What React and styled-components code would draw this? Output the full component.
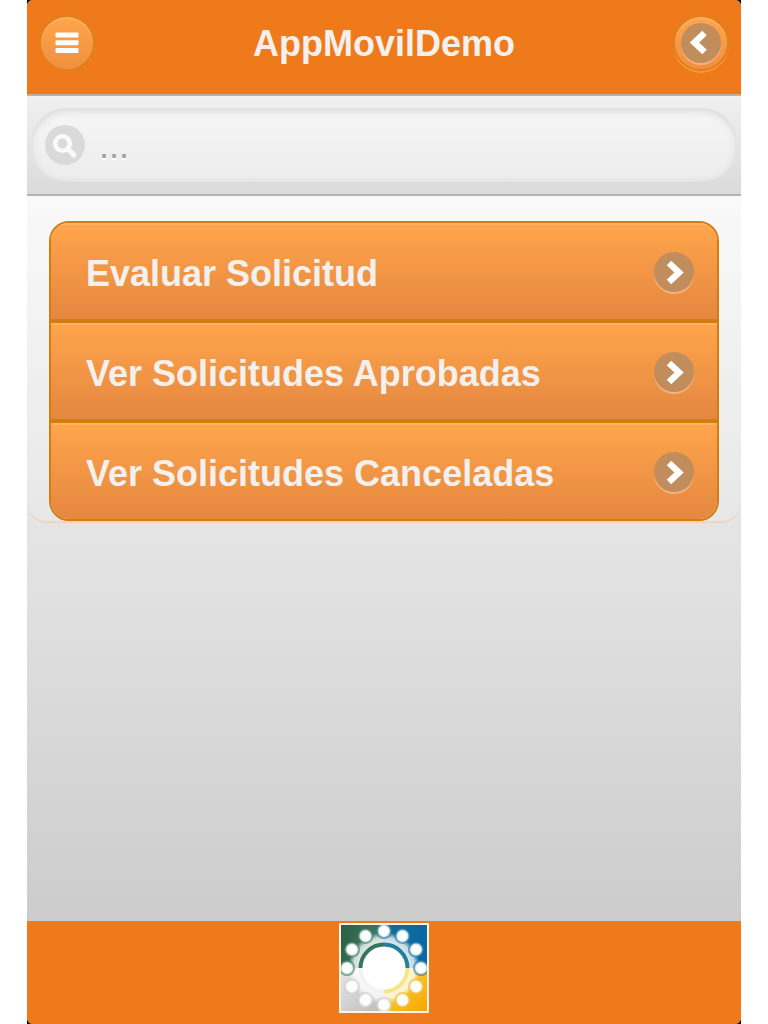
import React from "react";
import styled, { createGlobalStyle } from "styled-components";

const GlobalStyle = createGlobalStyle`
  *, *::before, *::after { box-sizing: border-box; }
  body {
    margin: 0;
    background: #fff;
    font-family: "Liberation Sans", Arial, sans-serif;
  }
`;

const Page = styled.div`
  min-height: 100vh;
  padding: 0 27px;
  display: flex;
`;

const Device = styled.div`
  flex: 1;
  min-width: 0;
  display: flex;
  background: #000;
`;

const Screen = styled.div`
  flex: 1;
  min-width: 0;
  display: flex;
  flex-direction: column;
  border-radius: 6px;
  overflow: hidden;
  background: #ccc;
`;

const Header = styled.header`
  display: flex;
  align-items: center;
  justify-content: space-between;
  height: 96px;
  padding: 0 12px 8px;
  background: #ee7a1b;
  border-bottom: 2px solid #bdb0a8;
`;

const Title = styled.h1`
  margin: 0;
  padding-top: 2px;
  font-size: 36px;
  line-height: 44px;
  font-weight: 700;
  color: #f3f0ee;
`;

const RoundButton = styled.button`
  width: 56px;
  height: 56px;
  padding: 0;
  display: flex;
  align-items: center;
  justify-content: center;
  border: 2px solid #df811c;
  border-radius: 50%;
  background: linear-gradient(#ffa54b, #f0903f);
  box-shadow: inset 0 2px 0 #ffb163${(p) => (p.$raised ? ", 0 2px 0 #f9973a" : "")};
`;

const Disc = styled.span`
  display: flex;
  flex: none;
  width: 40px;
  height: 40px;
  border-radius: 50%;
  background: ${(p) => (p.$muted ? "#dadada" : "#c28d5d")};
  box-shadow: ${(p) => (p.$muted ? "none" : "0 2px 0 #f8b17c")};
`;

const SearchBar = styled.form`
  height: 100px;
  padding: 12px 3px 14px;
  background: linear-gradient(#f0f0f0, #dadada);
  border-bottom: 2px solid #b3b3b3;
`;

const SearchField = styled.label`
  display: flex;
  align-items: center;
  gap: 14px;
  height: 74px;
  padding: 0 15px;
  border-radius: 37px;
  background: linear-gradient(#f6f6f6, #ececec);
  box-shadow: inset 0 2px 8px #d2d2d2;
`;

const SearchInput = styled.input`
  flex: 1;
  min-width: 0;
  height: 56px;
  padding: 2px 0 0;
  border: 0;
  outline: 0;
  background: transparent;
  font: 36px "Liberation Sans", Arial, sans-serif;
  color: #333;
  text-shadow: 0 2px 0 #fff;
  &::placeholder { color: #a0a0a0; opacity: 1; }
`;

const Content = styled.main`
  flex: 1;
  background: linear-gradient(#f9f9f9, #ccc);
`;

const Panel = styled.div`
  padding: 25px 22px 0;
  border-bottom: 2px solid #f3d5bd;
  border-radius: 0 0 20px 20px;
  background: rgba(255, 255, 255, 0.1);
`;

const Menu = styled.ul`
  margin: 0;
  padding: 0;
  list-style: none;
  border: 2px solid #d57b10;
  border-radius: 20px;
  overflow: hidden;
`;

const MenuItem = styled.li`
  & + & { border-top: 4px solid #d57b10; }
`;

const MenuLink = styled.a`
  display: flex;
  align-items: center;
  justify-content: space-between;
  height: 96px;
  padding: 2px 23px 0 35px;
  background: linear-gradient(#ffa54b, #e48740);
  box-shadow: inset 0 2px 0 #ffb367;
  color: #f3f0ee;
  font-size: 36px;
  line-height: 44px;
  font-weight: 700;
  text-decoration: none;
`;

const MenuLabel = styled.span`
  padding-top: 4px;
`;

const Footer = styled.footer`
  display: flex;
  justify-content: center;
  height: 103px;
  padding-top: 2px;
  background: #ee7a1b;
`;

const Chevron = ({ left }) => (
  <svg width="40" height="40" viewBox="0 0 40 40" aria-hidden="true">
    <path
      d={left ? "M23.500 10 13.500 19.500 23.500 29" : "M15 11 25 20.500 15 30"}
      fill="none"
      stroke="#fff"
      strokeWidth="6.500"
    />
  </svg>
);

const Bars = () => (
  <svg width="40" height="40" viewBox="0 0 40 40" aria-hidden="true">
    <g fill="#fff">
      <rect x="8.500" y="9.500" width="23" height="5" rx="1" />
      <rect x="8.500" y="17.300" width="23" height="5" rx="1" />
      <rect x="8.500" y="25" width="23" height="5" rx="1" />
    </g>
  </svg>
);

const Magnifier = () => (
  <svg width="40" height="40" viewBox="0 0 40 40" aria-hidden="true">
    <g fill="none" stroke="#fafafa">
      <circle cx="17.500" cy="18.500" r="7.300" strokeWidth="4.500" />
      <path d="m23 24 6 6" strokeWidth="5" strokeLinecap="round" />
    </g>
  </svg>
);

const DOTS = Array.from({ length: 12 }, (_, i) => {
  const angle = (i * Math.PI) / 6;
  return [45 + 37 * Math.sin(angle), 45 - 37 * Math.cos(angle)];
});

const Logo = () => (
  <svg width="90" height="90" viewBox="0 0 90 90" role="img" aria-label="Logo">
    <defs>
      <linearGradient id="green" x2="1" y2="0.300">
        <stop stopColor="#286044" />
        <stop offset="1" stopColor="#437d68" />
      </linearGradient>
      <linearGradient id="blue" x2="1">
        <stop stopColor="#156d94" />
        <stop offset="1" stopColor="#0868a7" />
      </linearGradient>
      <linearGradient id="silver" x2="1" y2="1">
        <stop stopColor="#e7e7e7" />
        <stop offset="1" stopColor="#bbb" />
      </linearGradient>
      <linearGradient id="gold" x2="1" y2="1">
        <stop stopColor="#f7dc50" />
        <stop offset="1" stopColor="#f8a600" />
      </linearGradient>
      <radialGradient id="dot">
        <stop offset="0.650" stopColor="#f8fffd" />
        <stop offset="0.800" stopColor="#fff" stopOpacity="0.700" />
        <stop offset="1" stopColor="#fff" stopOpacity="0" />
      </radialGradient>
      <radialGradient id="halo" gradientUnits="userSpaceOnUse" cx="45" cy="45" r="36">
        <stop offset="0.600" stopColor="#fff" stopOpacity="0.900" />
        <stop offset="0.850" stopColor="#fff" stopOpacity="0.750" />
        <stop offset="1" stopColor="#fff" stopOpacity="0" />
      </radialGradient>
      <clipPath id="frame"><path d="M2 2h86v86H2z" /></clipPath>
    </defs>
    <path fill="#fff4e4" d="M0 0h90v90H0z" />
    <g clipPath="url(#frame)">
      <path fill="url(#green)" d="M2 2h43v43H2z" />
      <path fill="url(#blue)" d="M45 2h43v43H45z" />
      <path fill="url(#silver)" d="M2 45h43v43H2z" />
      <path fill="url(#gold)" d="M45 45h43v43H45z" />
      <circle cx="45" cy="45" r="36" fill="url(#halo)" />
      {DOTS.map(([x, y], i) => {
        const tint = i < 4 ? "#2b7f9f" : i < 6 ? "#efbd35" : i < 9 ? "#cfcfcf" : "#4a806b";
        return (
          <g key={i}>
            <circle cx={x} cy={y} r="8" fill={tint} fillOpacity="0.700" />
            <circle cx={x} cy={y} r="7" fill="url(#dot)" />
          </g>
        );
      })}
      <circle cx="45" cy="45" r="22" fill="#fff" />
      <path d="M21.500 45A23.500 23.500 0 0 1 45 21.500" fill="none" stroke="#347761" strokeWidth="4" />
      <path d="M45 21.500A23.500 23.500 0 0 1 68.500 45" fill="none" stroke="#257f9b" strokeWidth="4" />
      <path d="M68.500 45A23.500 23.500 0 0 1 45 68.500" fill="none" stroke="#f7e58a" strokeWidth="4" />
      <path d="M45 68.500A23.500 23.500 0 0 1 21.500 45" fill="none" stroke="#f3f3f3" strokeWidth="4" />
    </g>
  </svg>
);

const ITEMS = [
  "Evaluar Solicitud",
  "Ver Solicitudes Aprobadas",
  "Ver Solicitudes Canceladas",
];

export default function App() {
  return (
    <Page>
      <GlobalStyle />
      <Device>
        <Screen>
          <Header>
            <RoundButton type="button" aria-label="Menú">
              <Bars />
            </RoundButton>
            <Title>AppMovilDemo</Title>
            <RoundButton type="button" aria-label="Volver" $raised>
              <Disc><Chevron left /></Disc>
            </RoundButton>
          </Header>
          <SearchBar role="search">
            <SearchField>
              <Disc $muted><Magnifier /></Disc>
              <SearchInput type="text" placeholder="..." aria-label="Buscar" />
            </SearchField>
          </SearchBar>
          <Content>
            <Panel>
              <Menu>
                {ITEMS.map((item) => (
                  <MenuItem key={item}>
                    <MenuLink href="#">
                      <MenuLabel>{item}</MenuLabel>
                      <Disc><Chevron /></Disc>
                    </MenuLink>
                  </MenuItem>
                ))}
              </Menu>
            </Panel>
          </Content>
          <Footer>
            <Logo />
          </Footer>
        </Screen>
      </Device>
    </Page>
  );
}
